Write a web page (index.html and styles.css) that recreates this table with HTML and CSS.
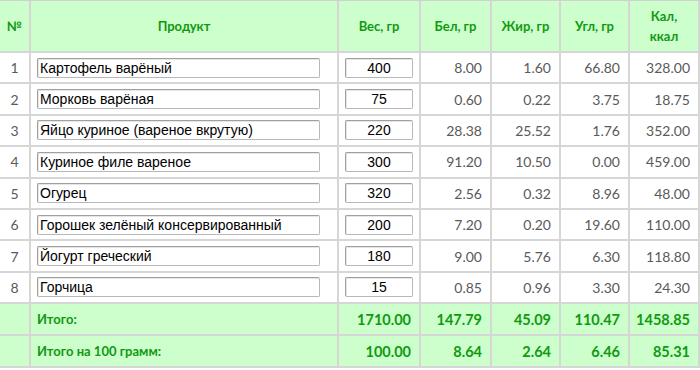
FILE: index.html
```html
<!DOCTYPE html>
<html lang="ru">
<head>
<meta charset="utf-8">
<link rel="stylesheet" href="styles.css">
</head>
<body>
<table class="calc">
  <colgroup>
    <col class="c-num"><col class="c-prod"><col class="c-w"><col class="c-b"><col class="c-f"><col class="c-u"><col class="c-k">
  </colgroup>
  <thead>
    <tr>
      <th>№</th><th>Продукт</th><th>Вес, гр</th><th>Бел, гр</th><th>Жир, гр</th><th>Угл, гр</th><th>Кал,<br>ккал</th>
    </tr>
  </thead>
  <tbody>
    <tr><td class="n">1</td><td class="p"><input class="prod" value="Картофель варёный"></td><td class="w"><input class="wt" value="400"></td><td>8.00</td><td>1.60</td><td>66.80</td><td>328.00</td></tr>
    <tr><td class="n">2</td><td class="p"><input class="prod" value="Морковь варёная"></td><td class="w"><input class="wt" value="75"></td><td>0.60</td><td>0.22</td><td>3.75</td><td>18.75</td></tr>
    <tr><td class="n">3</td><td class="p"><input class="prod" value="Яйцо куриное (вареное вкрутую)"></td><td class="w"><input class="wt" value="220"></td><td>28.38</td><td>25.52</td><td>1.76</td><td>352.00</td></tr>
    <tr><td class="n">4</td><td class="p"><input class="prod" value="Куриное филе вареное"></td><td class="w"><input class="wt" value="300"></td><td>91.20</td><td>10.50</td><td>0.00</td><td>459.00</td></tr>
    <tr><td class="n">5</td><td class="p"><input class="prod" value="Огурец"></td><td class="w"><input class="wt" value="320"></td><td>2.56</td><td>0.32</td><td>8.96</td><td>48.00</td></tr>
    <tr><td class="n">6</td><td class="p"><input class="prod" value="Горошек зелёный консервированный"></td><td class="w"><input class="wt" value="200"></td><td>7.20</td><td>0.20</td><td>19.60</td><td>110.00</td></tr>
    <tr><td class="n">7</td><td class="p"><input class="prod" value="Йогурт греческий"></td><td class="w"><input class="wt" value="180"></td><td>9.00</td><td>5.76</td><td>6.30</td><td>118.80</td></tr>
    <tr><td class="n">8</td><td class="p"><input class="prod" value="Горчица"></td><td class="w"><input class="wt" value="15"></td><td>0.85</td><td>0.96</td><td>3.30</td><td>24.30</td></tr>
  </tbody>
  <tfoot>
    <tr><td></td><td class="lbl">Итого:</td><td>1710.00</td><td>147.79</td><td>45.09</td><td>110.47</td><td>1458.85</td></tr>
    <tr><td></td><td class="lbl">Итого на 100 грамм:</td><td>100.00</td><td>8.64</td><td>2.64</td><td>6.46</td><td>85.31</td></tr>
  </tfoot>
</table>
</body>
</html>
```

FILE: styles.css
```css
html, body {
  margin: 0;
  padding: 0;
  background: #ffffff;
}
.calc {
  border-collapse: separate;
  border-spacing: 0;
  table-layout: fixed;
  width: 700px;
  font-family: Lato, "Open Sans", sans-serif;
  font-size: 14px;
  color: #5a5a5a;
  border-top: 1px solid #d0d0d0;
}
.c-num { width: 31px; }
.c-prod { width: 308px; }
.c-w { width: 82px; }
.c-b { width: 71px; }
.c-f { width: 69px; }
.c-u { width: 69px; }
.c-k { width: 70px; }
.calc th, .calc td {
  border-right: 2px solid #d6d6d6;
  border-bottom: 2px solid #d6d6d6;
  padding: 0 8px 0 4px;
  box-sizing: border-box;
}
.calc th {
  background: #ccffcc;
  color: #119911;
  font-weight: 700;
  font-size: 13px;
  line-height: 20px;
  height: 52px;
  text-align: center;
  padding: 0 2px;
}
.calc tbody td {
  height: 31.4px;
  text-align: right;
}
.calc td.n {
  text-align: center;
  padding: 0;
}
.calc td.p {
  padding: 0 0 0 6px;
  text-align: left;
}
.calc td.w {
  padding: 0 0 0 6px;
  text-align: left;
}
.prod, .wt {
  display: block;
  box-sizing: border-box;
  height: 20px;
  margin: 0;
  padding: 0 2px;
  font-family: "Liberation Sans", Arial, sans-serif;
  font-size: 14px;
  color: #000;
  background: #fff;
  border: 1px solid #a0a0a0;
  border-right-color: #b8b8b8;
  border-bottom-color: #b8b8b8;
  border-radius: 2px;
  box-shadow: inset 1px 1px 0 #e6e6e6;
}
.prod { width: 283px; }
.wt { width: 68px; text-align: center; }
.calc tfoot td {
  background: #ccffcc;
  color: #119911;
  font-weight: 700;
  font-size: 14.5px;
  height: 32px;
  text-align: right;
}
.calc tfoot td.lbl {
  text-align: left;
  padding-left: 6px;
  font-size: 13px;
}
```
